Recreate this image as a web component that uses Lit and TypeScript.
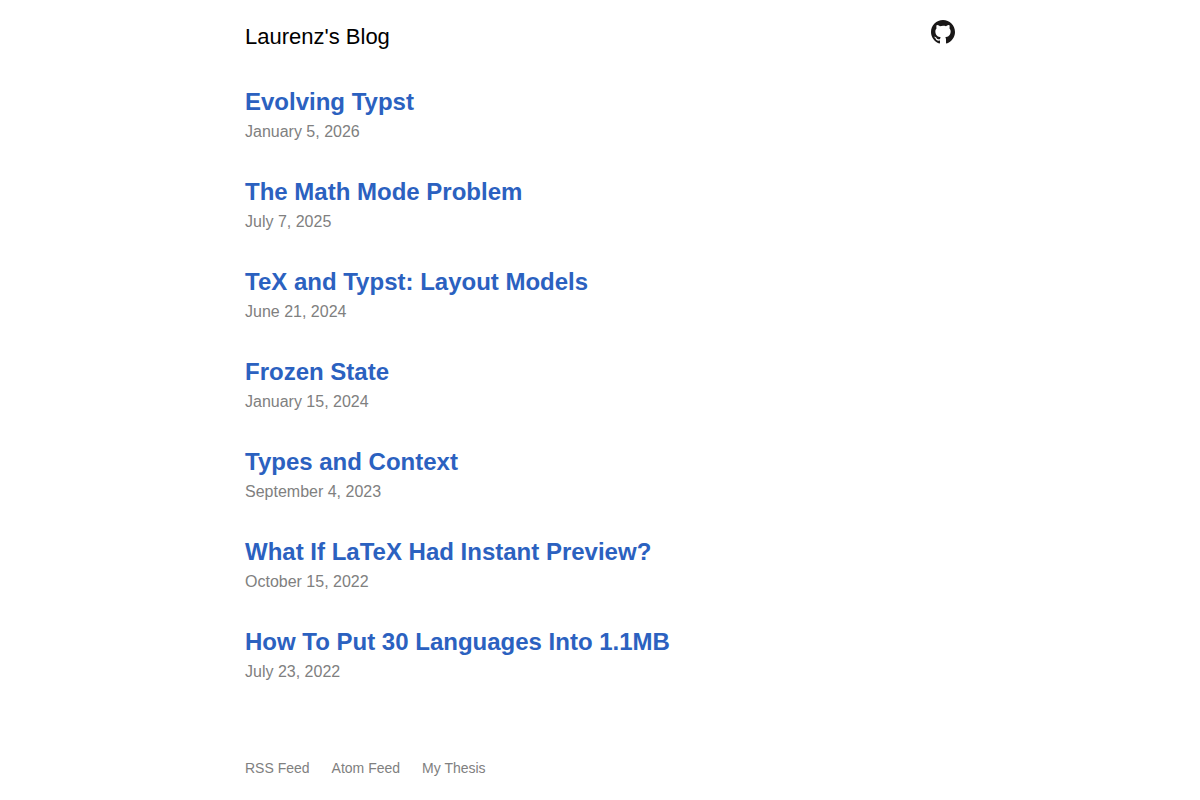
import { LitElement, html, css } from "lit";
import { customElement } from "lit/decorators.js";

interface Post {
  title: string;
  date: string;
  href: string;
}

const posts: Post[] = [
  { title: "Evolving Typst", date: "January 5, 2026", href: "#evolving-typst" },
  { title: "The Math Mode Problem", date: "July 7, 2025", href: "#math-mode-problem" },
  { title: "TeX and Typst: Layout Models", date: "June 21, 2024", href: "#layout-models" },
  { title: "Frozen State", date: "January 15, 2024", href: "#frozen-state" },
  { title: "Types and Context", date: "September 4, 2023", href: "#types-and-context" },
  { title: "What If LaTeX Had Instant Preview?", date: "October 15, 2022", href: "#instant-preview" },
  { title: "How To Put 30 Languages Into 1.1MB", date: "July 23, 2022", href: "#hypher" },
];

@customElement("app-root")
export class AppRoot extends LitElement {
  static styles = css`
    :host {
      display: block;
      box-sizing: border-box;
      max-width: 750px;
      margin: 0 auto;
      padding: 20px;
      background: #fff;
      color: #000;
      font-family: "Liberation Sans", Arial, sans-serif;
      font-size: 16px;
      line-height: 24px;
    }
    a {
      color: inherit;
      text-decoration: none;
    }
    .header {
      display: flex;
      justify-content: space-between;
      align-items: flex-start;
      margin-bottom: 32px;
    }
    .brand {
      font-size: 22px;
      line-height: 34px;
    }
    .github {
      display: block;
      color: #191717;
    }
    .github svg {
      display: block;
    }
    .posts {
      display: flex;
      flex-direction: column;
      gap: 30px;
      list-style: none;
      margin: 0;
      padding: 0;
    }
    .title {
      margin: 0;
      font-size: 24px;
      line-height: 32px;
      font-weight: bold;
      color: #2b61c0;
    }
    .date {
      display: block;
      line-height: 28px;
      color: #808080;
    }
    .footer {
      display: flex;
      gap: 22px;
      margin-top: 70px;
      font-size: 14px;
      color: #808080;
    }
  `;

  render() {
    return html`
      <header class="header">
        <a class="brand" href="#">Laurenz's Blog</a>
        <a class="github" href="#github" aria-label="GitHub">
          <svg width="24" height="24" viewBox="0 0 24 24" fill="currentColor" aria-hidden="true">
            <path
              d="M12 0C5.374 0 0 5.373 0 12c0 5.302 3.438 9.8 8.207 11.387.599.111.793-.261.793-.577v-2.234c-3.338.726-4.033-1.416-4.033-1.416-.546-1.387-1.333-1.756-1.333-1.756-1.089-.745.083-.729.083-.729 1.205.084 1.839 1.237 1.839 1.237 1.07 1.834 2.807 1.304 3.492.997.107-.775.418-1.305.762-1.604-2.665-.305-5.467-1.334-5.467-5.931 0-1.311.469-2.381 1.236-3.221-.124-.303-.535-1.524.117-3.176 0 0 1.008-.322 3.301 1.23A11.509 11.509 0 0 1 12 5.803c1.02.005 2.047.138 3.006.404 2.291-1.552 3.297-1.23 3.297-1.23.653 1.653.242 2.874.118 3.176.77.84 1.235 1.911 1.235 3.221 0 4.609-2.807 5.624-5.479 5.921.43.372.823 1.102.823 2.222v3.293c0 .319.192.694.801.576C20.566 21.797 24 17.3 24 12c0-6.627-5.373-12-12-12z"
            />
          </svg>
        </a>
      </header>
      <main>
        <ul class="posts">
          ${posts.map(
            (post) => html`
              <li>
                <h2 class="title"><a href=${post.href}>${post.title}</a></h2>
                <time class="date">${post.date}</time>
              </li>
            `
          )}
        </ul>
      </main>
      <footer class="footer">
        <a href="#rss">RSS Feed</a>
        <a href="#atom">Atom Feed</a>
        <a href="#thesis">My Thesis</a>
      </footer>
    `;
  }
}
